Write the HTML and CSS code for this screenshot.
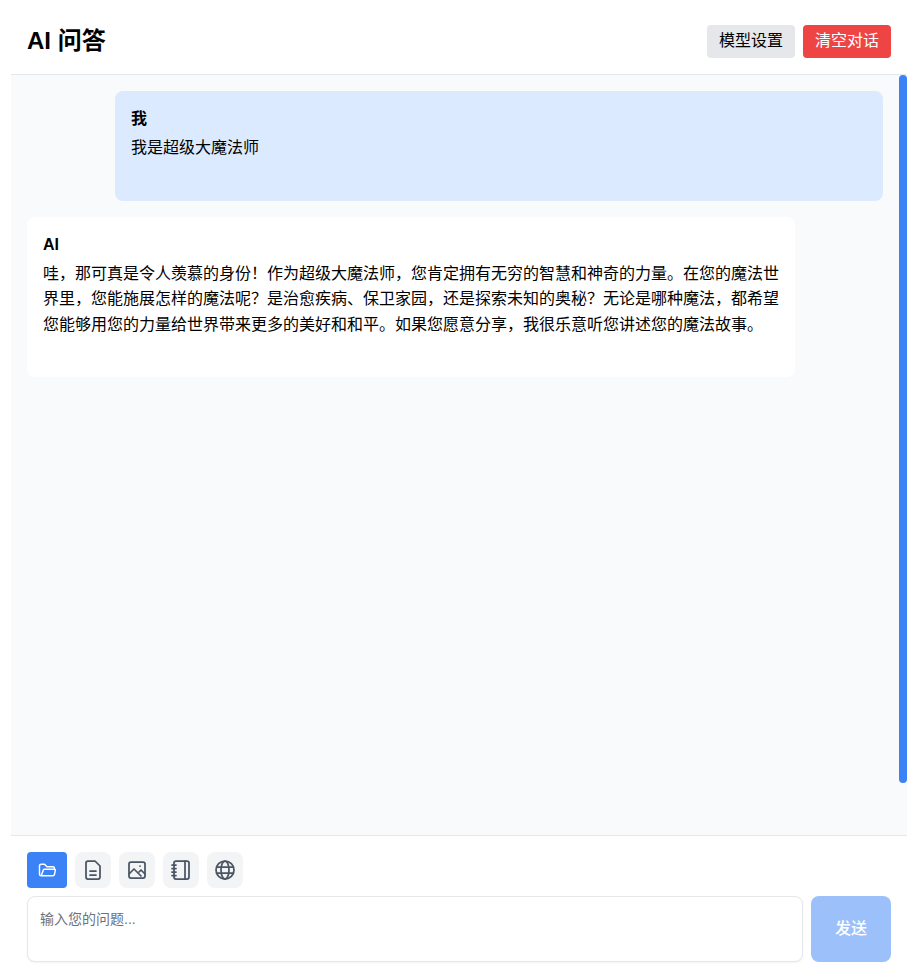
FILE: index.html
```html
<!DOCTYPE html>
<html lang="zh-CN">
<head>
  <meta charset="UTF-8">
  <meta name="viewport" content="width=device-width, initial-scale=1.0">
  <title>AI 问答</title>
  <link rel="stylesheet" href="styles.css">
</head>
<body>
  <div class="app">
    <!-- Header -->
    <header class="header">
      <h1>AI 问答</h1>
      <div class="header-actions">
        <button class="btn btn-gray">模型设置</button>
        <button class="btn btn-red">清空对话</button>
      </div>
    </header>

    <!-- Messages -->
    <main class="chat">
      <div class="message message-user">
        <div class="message-name">我</div>
        <p>我是超级大魔法师</p>
      </div>
      <div class="message message-ai">
        <div class="message-name">AI</div>
        <p>哇，那可真是令人羡慕的身份！作为超级大魔法师，您肯定拥有无穷的智慧和神奇的力量。在您的魔法世界里，您能施展怎样的魔法呢？是治愈疾病、保卫家园，还是探索未知的奥秘？无论是哪种魔法，都希望您能够用您的力量给世界带来更多的美好和和平。如果您愿意分享，我很乐意听您讲述您的魔法故事。</p>
      </div>
      <div class="scroll-thumb"></div>
    </main>

    <!-- Input -->
    <footer class="footer">
      <div class="tools">
        <button class="tool tool-active" aria-label="文件夹">
          <svg width="20" height="20" viewBox="0 0 24 24"><path d="M5 19l2.757-7.351a1 1 0 0 1 .936-.649h12.307a1 1 0 0 1 .986 1.164l-.996 5.211a2 2 0 0 1-1.964 1.625H5a2 2 0 0 1-2-2V7a2 2 0 0 1 2-2h4l3 3h7a2 2 0 0 1 2 2v1"/></svg>
        </button>
        <button class="tool" aria-label="文档">
          <svg width="24" height="24" viewBox="0 0 24 24"><path d="M8 3h6l5 5v11a2 2 0 0 1-2 2H7a2 2 0 0 1-2-2V5a2 2 0 0 1 2-2z"/><path d="M9 13h6M9 17h6"/></svg>
        </button>
        <button class="tool" aria-label="图片">
          <svg width="24" height="24" viewBox="0 0 24 24"><rect x="4" y="4" width="16" height="16" rx="2"/><path d="M4 16l5-5 7 7"/><path d="M14 14l2-2 4 4"/><path d="M15 8h.01"/></svg>
        </button>
        <button class="tool" aria-label="笔记">
          <svg width="24" height="24" viewBox="0 0 24 24"><rect x="5" y="3" width="15" height="18" rx="2"/><path d="M16 3v18"/><path d="M3 7h4M3 10.500h4M3 14h4M3 17.500h4"/></svg>
        </button>
        <button class="tool" aria-label="联网">
          <svg width="24" height="24" viewBox="0 0 24 24"><circle cx="12" cy="12" r="9"/><ellipse cx="12" cy="12" rx="4" ry="9"/><path d="M3.600 9h16.800M3.600 15h16.800"/></svg>
        </button>
      </div>
      <div class="input-row">
        <textarea class="input" placeholder="输入您的问题..."></textarea>
        <button class="send" disabled>发送</button>
      </div>
    </footer>
  </div>
</body>
</html>
```

FILE: styles.css
```css
/* General */
* {
  box-sizing: border-box;
}

body {
  margin: 0;
  background: #fff;
  color: #000;
  font-family: "Liberation Sans", "Noto Sans CJK SC", sans-serif;
}

.app {
  display: flex;
  flex-direction: column;
  width: 896px;
  height: 978px;
  margin-left: 11px;
}

/* Header */
.header {
  display: flex;
  justify-content: space-between;
  align-items: center;
  height: 75px;
  padding: 2px 16px 0;
  border-bottom: 1px solid #e5e7eb;
}

.header h1 {
  margin: 0;
  font-size: 24px;
  font-weight: bold;
}

.header-actions {
  display: flex;
  gap: 8px;
  margin-top: 6px;
}

.btn {
  height: 33px;
  padding: 0 12px 4px;
  border: none;
  border-radius: 4px;
  font-family: inherit;
  font-size: 16px;
}

.btn-gray {
  background: #e5e7eb;
  color: #000;
}

.btn-red {
  background: #ef4444;
  color: #fff;
}

/* Messages */
.chat {
  position: relative;
  display: flex;
  flex-direction: column;
  gap: 16px;
  flex: 1;
  padding: 16px 24px 16px 16px;
  background: #f9fafb;
}

.message {
  width: 768px;
  padding: 16px;
  border-radius: 8px;
  font-size: 16px;
}

.message-user {
  align-self: flex-end;
  background: #dbeafe;
}

.message-ai {
  align-self: flex-start;
  background: #fff;
}

.message-name {
  height: 24px;
  margin-bottom: 4px;
  font-weight: bold;
  line-height: 24px;
}

.message p {
  margin: 0 0 24px;
  line-height: 1.6;
}

.scroll-thumb {
  position: absolute;
  top: 0;
  right: 0;
  width: 8px;
  height: 708px;
  border-radius: 4px;
  background: #3b82f6;
}

/* Input */
.footer {
  padding: 16px;
  border-top: 1px solid #e5e7eb;
}

.tools {
  display: flex;
  gap: 8px;
  margin-bottom: 8px;
}

.tool {
  display: flex;
  justify-content: center;
  align-items: center;
  width: 36px;
  height: 36px;
  padding: 0;
  border: none;
  border-radius: 8px;
  background: #f3f4f6;
  color: #4b5563;
}

.tool svg {
  fill: none;
  stroke: currentColor;
  stroke-width: 1.75;
  stroke-linecap: round;
  stroke-linejoin: round;
}

.tool-active {
  width: 40px;
  border-radius: 4px;
  background: #3b82f6;
  color: #fff;
}

.input-row {
  display: flex;
  gap: 8px;
}

.input {
  flex: 1;
  height: 66px;
  padding: 11px 12px;
  border: 1px solid #e5e7eb;
  border-radius: 8px;
  box-shadow: 0 1px 2px rgba(0, 0, 0, 0.05);
  font-family: inherit;
  font-size: 14px;
  resize: none;
}

.input::placeholder {
  color: #6b7280;
}

.send {
  width: 80px;
  height: 66px;
  padding-bottom: 6px;
  border: none;
  border-radius: 8px;
  background: #3b82f6;
  opacity: 0.5;
  color: #fff;
  font-family: inherit;
  font-size: 16px;
  font-weight: 500;
}
```
